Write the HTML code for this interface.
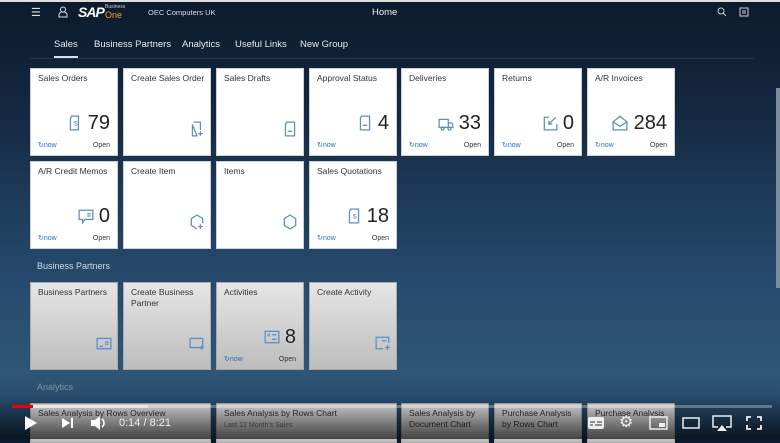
<!DOCTYPE html>
<html><head><meta charset="utf-8"><style>
*{margin:0;padding:0;box-sizing:border-box}
body{width:780px;height:439px;overflow:hidden;font-family:"Liberation Sans",sans-serif;background:linear-gradient(180deg,#0c1a2c 0%,#142840 25%,#24476a 60%,#2f5677 85%,#1f3d5c 100%);position:relative;color:#fff}
.a{position:absolute}
.t{position:absolute;width:88px;height:88px;background:#fff;color:#333;border:1px solid #c9d1da}
.g{background:linear-gradient(180deg,#e6e6e6,#bdbdbd);border-color:#aaa}
.t .h{position:absolute;left:7px;top:4px;font-size:8.5px;line-height:11px;width:78px}
.t .n{position:absolute;right:7px;top:43px;font-size:20px;color:#222}
.t .now{position:absolute;left:7px;bottom:6px;font-size:7px;color:#2a6fbf}
.t .op{position:absolute;right:7px;bottom:6px;font-size:7px;color:#333}
.nav span{position:absolute;top:39px;font-size:9.5px;color:#e6ecf2}
.sec{position:absolute;left:37px;font-size:9px;color:#cfd8e2}
svg.i{position:absolute;width:16px;height:16px;fill:none;stroke:#5a8fc4;stroke-width:1.1}
</style></head><body>
<div class="a" style="left:0;top:0;width:780px;height:2px;background:#ddd"></div>
<div class="a" style="left:31px;top:6px;font-size:11px;color:#ddd">☰</div>
<svg class="a" style="left:58px;top:6px" width="10" height="12" viewBox="0 0 10 12"><circle cx="5" cy="3.5" r="2.5" fill="none" stroke="#ddd"/><path d="M1 11v-2a3 3 0 0 1 3-3h2a3 3 0 0 1 3 3v2z" fill="none" stroke="#ddd"/></svg>
<div class="a" style="left:78px;top:4px;font-size:14px;font-weight:bold;font-style:italic;letter-spacing:-1px;color:#fff">SAP</div>
<div class="a" style="left:105px;top:4px;font-size:5px;color:#ccc">Business</div>
<div class="a" style="left:105px;top:10px;font-size:9px;color:#f0a030">One</div>
<div class="a" style="left:148px;top:8px;font-size:7.5px;color:#dde">OEC Computers UK</div>
<div class="a" style="left:372px;top:7px;font-size:9.5px;color:#eee">Home</div>
<svg class="a" style="left:717px;top:7px" width="10" height="10"><circle cx="4" cy="4" r="3" fill="none" stroke="#ccc"/><path d="M6 6l3 3" stroke="#ccc"/></svg>
<svg class="a" style="left:739px;top:7px" width="10" height="10"><rect x="1" y="1" width="8" height="8" fill="none" stroke="#ccc"/><path d="M3 4h4M3 6h4" stroke="#ccc"/></svg>
<div class="nav">
<span style="left:54px">Sales</span><span style="left:94px">Business Partners</span><span style="left:182px">Analytics</span><span style="left:235px">Useful Links</span><span style="left:300px">New Group</span>
</div>
<div class="a" style="left:54px;top:56px;width:24px;height:2px;background:#dde"></div>
<div class="a" style="left:30px;top:58px;width:724px;height:1px;background:#22364f"></div>
<div class="a" style="left:776px;top:88px;width:4px;height:200px;background:#7d8a98"></div>

<div class="t" style="left:30px;top:68px"><div class="h">Sales Orders</div><svg class="i" style="left:36px;top:46px" viewBox="0 0 14 14"><path d="M4 1h6v12H3V3z"/><text x="6" y="9" font-size="6" fill="#5a8fc4" stroke="none">$</text></svg><div class="n">79</div><div class="now">↻now</div><div class="op">Open</div></div>
<div class="t" style="left:123px;top:68px"><div class="h">Create Sales Order</div><svg class="i" style="left:65px;top:52px" viewBox="0 0 14 14"><path d="M4 1h6v7M7 13H3V3z"/><path d="M10 9v4M8 11h4"/></svg></div>
<div class="t" style="left:216px;top:68px"><div class="h">Sales Drafts</div><svg class="i" style="left:65px;top:52px" viewBox="0 0 14 14"><path d="M4 1h7v12H3V3z"/><path d="M5 9h4"/></svg></div>
<div class="t" style="left:309px;top:68px"><div class="h">Approval Status</div><svg class="i" style="left:47px;top:46px" viewBox="0 0 14 14"><path d="M4 1h7v12H3V3z"/><path d="M5 9h4"/></svg><div class="n">4</div><div class="now">↻now</div></div>
<div class="t" style="left:401px;top:68px"><div class="h">Deliveries</div><svg class="i" style="left:36px;top:47px" viewBox="0 0 14 14"><path d="M1 3h8v7H1zM9 6h3l1 2v2H9"/><circle cx="4" cy="11" r="1.3"/><circle cx="10" cy="11" r="1.3"/></svg><div class="n">33</div><div class="now">↻now</div><div class="op">Open</div></div>
<div class="t" style="left:494px;top:68px"><div class="h">Returns</div><svg class="i" style="left:47px;top:46px" viewBox="0 0 14 14"><path d="M6 2H2v11h11V8"/><path d="M12 2L6 8M6 5v3h3"/></svg><div class="n">0</div><div class="now">↻now</div><div class="op">Open</div></div>
<div class="t" style="left:587px;top:68px"><div class="h">A/R Invoices</div><svg class="i" style="left:24px;top:46px" viewBox="0 0 14 14"><path d="M1 6l6-5 6 5v7H1zM1 6l6 4 6-4"/></svg><div class="n">284</div><div class="now">↻now</div><div class="op">Open</div></div>
<div class="t" style="left:30px;top:161px"><div class="h">A/R Credit Memos</div><svg class="i" style="left:47px;top:46px" viewBox="0 0 14 14"><path d="M1 2h12v8H6l-2 3v-3H1z"/><path d="M8 5h3M8 7h3"/></svg><div class="n">0</div><div class="now">↻now</div><div class="op">Open</div></div>
<div class="t" style="left:123px;top:161px"><div class="h">Create Item</div><svg class="i" style="left:65px;top:52px" viewBox="0 0 14 14"><path d="M2 4l5-3 5 3v4M7 13L2 10V4"/><path d="M10 9v4M8 11h4"/></svg></div>
<div class="t" style="left:216px;top:161px"><div class="h">Items</div><svg class="i" style="left:65px;top:52px" viewBox="0 0 14 14"><path d="M2 4l5-3 5 3v6l-5 3-5-3z"/></svg></div>
<div class="t" style="left:309px;top:161px"><div class="h">Sales Quotations</div><svg class="i" style="left:36px;top:46px" viewBox="0 0 14 14"><path d="M4 1h7v12H3V3z"/><text x="6" y="9" font-size="6" fill="#5a8fc4" stroke="none">$</text></svg><div class="n">18</div><div class="now">↻now</div><div class="op">Open</div></div>

<div class="sec" style="top:261px">Business Partners</div>
<div class="t g" style="left:30px;top:282px"><div class="h">Business Partners</div><svg class="i" style="left:65px;top:52px" viewBox="0 0 14 14"><rect x="1" y="3" width="12" height="9"/><path d="M8 6h3M8 8h3M3 10h3"/></svg></div>
<div class="t g" style="left:123px;top:282px"><div class="h">Create Business Partner</div><svg class="i" style="left:65px;top:52px" viewBox="0 0 14 14"><rect x="1" y="3" width="11" height="8"/><path d="M11 9v4M9 11h4"/></svg></div>
<div class="t g" style="left:216px;top:282px"><div class="h">Activities</div><svg class="i" style="left:47px;top:46px" viewBox="0 0 14 14"><rect x="1" y="2" width="12" height="10"/><path d="M7 5h4M7 9h4M3 5l1 1 1-2"/></svg><div class="n">8</div><div class="now">↻now</div><div class="op">Open</div></div>
<div class="t g" style="left:309px;top:282px"><div class="h">Create Activity</div><svg class="i" style="left:65px;top:52px" viewBox="0 0 14 14"><path d="M12 7V2H1v10h6"/><path d="M11 9v4M9 11h4M6 5h4"/></svg></div>

<div class="sec" style="top:382px;color:#7f93a8">Analytics</div>
<div class="t g" style="left:30px;top:403px;width:181px;height:40px"><div class="h" style="width:170px">Sales Analysis by Rows Overview</div></div>
<div class="t g" style="left:216px;top:403px;width:181px;height:40px"><div class="h" style="width:170px">Sales Analysis by Rows Chart<br><span style="font-size:7px;color:#666">Last 12 Month's Sales</span></div></div>
<div class="t g" style="left:401px;top:403px;height:40px"><div class="h">Sales Analysis by Document Chart</div></div>
<div class="t g" style="left:494px;top:403px;height:40px"><div class="h">Purchase Analysis by Rows Chart</div></div>
<div class="t g" style="left:587px;top:403px;height:40px"><div class="h">Purchase Analysis</div></div>
<div class="a" style="left:0;top:395px;width:780px;height:44px;background:linear-gradient(180deg,rgba(0,0,0,0),rgba(0,0,0,.65))"></div>
<div class="a" style="left:12px;top:405px;width:760px;height:3px;background:rgba(255,255,255,.3)"></div>
<div class="a" style="left:12px;top:405px;width:136px;height:3px;background:rgba(255,255,255,.5)"></div>
<div class="a" style="left:12px;top:405px;width:21px;height:3px;background:#e00"></div>
<svg class="a" style="left:24px;top:415px" width="14" height="16"><path d="M1 1l12 7-12 7z" fill="#fff"/></svg>
<svg class="a" style="left:61px;top:417px" width="14" height="12"><path d="M1 1l8 5-8 5z" fill="#fff"/><rect x="10" y="1" width="2" height="10" fill="#fff"/></svg>
<svg class="a" style="left:90px;top:415px" width="18" height="16"><path d="M1 5h4l5-4v14l-5-4H1z" fill="#fff"/><path d="M12 4a5 5 0 0 1 0 8" stroke="#fff" fill="none" stroke-width="1.5"/></svg>
<div class="a" style="left:119px;top:417px;font-size:11px;color:#eee">0:14 / 8:21</div>
<svg class="a" style="left:588px;top:417px" width="16" height="12"><rect width="16" height="12" rx="2" fill="#eee"/><path d="M2 5h5M9 5h5M2 8h3M7 8h7" stroke="#333"/></svg>
<div class="a" style="left:619px;top:412px;font-size:16px;color:#eee">⚙</div>
<svg class="a" style="left:649px;top:416px" width="19" height="14"><rect x="1" y="1" width="17" height="12" fill="none" stroke="#eee" stroke-width="1.5"/><rect x="10" y="7" width="6" height="4" fill="#eee"/></svg>
<svg class="a" style="left:682px;top:417px" width="18" height="12"><rect x="1" y="1" width="16" height="10" fill="none" stroke="#eee" stroke-width="1.5"/></svg>
<svg class="a" style="left:712px;top:415px" width="20" height="16"><path d="M6 12H1V1h18v11h-5" fill="none" stroke="#eee" stroke-width="1.5"/><path d="M5 16l5-6 5 6z" fill="#eee"/></svg>
<svg class="a" style="left:746px;top:416px" width="16" height="14"><path d="M1 5V1h4M11 1h4v4M15 9v4h-4M5 13H1V9" fill="none" stroke="#eee" stroke-width="1.8"/></svg>
</body></html>
